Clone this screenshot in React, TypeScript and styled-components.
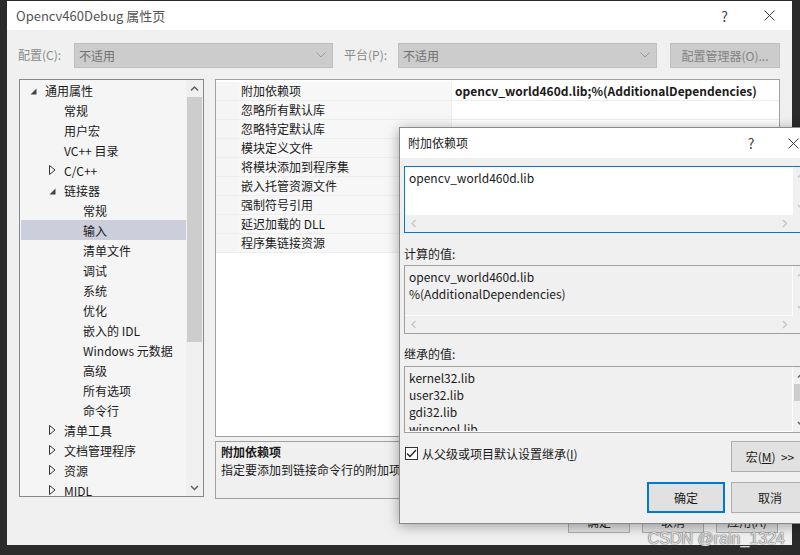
import styled, { createGlobalStyle } from 'styled-components'

const GlobalStyle = createGlobalStyle`
  html, body {
    margin: 0;
    padding: 0;
  }
  body {
    background: #2b2b2b;
    font-family: "Noto Sans CJK SC", "Noto Sans", sans-serif;
    font-size: 12px;
    color: #1a1a1a;
  }
  * {
    box-sizing: border-box;
  }
`

type TreeItem = {
  label: string
  level: number
  arrow?: 'open' | 'closed'
  selected?: boolean
}

const treeItems: TreeItem[] = [
  { label: '通用属性', level: 0, arrow: 'open' },
  { label: '常规', level: 1 },
  { label: '用户宏', level: 1 },
  { label: 'VC++ 目录', level: 1 },
  { label: 'C/C++', level: 1, arrow: 'closed' },
  { label: '链接器', level: 1, arrow: 'open' },
  { label: '常规', level: 2 },
  { label: '输入', level: 2, selected: true },
  { label: '清单文件', level: 2 },
  { label: '调试', level: 2 },
  { label: '系统', level: 2 },
  { label: '优化', level: 2 },
  { label: '嵌入的 IDL', level: 2 },
  { label: 'Windows 元数据', level: 2 },
  { label: '高级', level: 2 },
  { label: '所有选项', level: 2 },
  { label: '命令行', level: 2 },
  { label: '清单工具', level: 1, arrow: 'closed' },
  { label: '文档管理程序', level: 1, arrow: 'closed' },
  { label: '资源', level: 1, arrow: 'closed' },
  { label: 'MIDL', level: 1, arrow: 'closed' },
]

const properties = [
  { name: '附加依赖项', value: 'opencv_world460d.lib;%(AdditionalDependencies)' },
  { name: '忽略所有默认库', value: '' },
  { name: '忽略特定默认库', value: '' },
  { name: '模块定义文件', value: '' },
  { name: '将模块添加到程序集', value: '' },
  { name: '嵌入托管资源文件', value: '' },
  { name: '强制符号引用', value: '' },
  { name: '延迟加载的 DLL', value: '' },
  { name: '程序集链接资源', value: '' },
]

const Page = styled.div`
  position: relative;
  width: 800px;
  height: 555px;
  overflow: hidden;
  padding: 1px 8px 10px 7px;
`

const Window = styled.div`
  width: 785px;
  height: 544px;
  display: flex;
  flex-direction: column;
  background: #f0f0f0;
`

const TitleBar = styled.div<{ $height: number }>`
  height: ${(p) => p.$height}px;
  flex-shrink: 0;
  display: flex;
  align-items: center;
  background: #ffffff;
`

const TitleText = styled.div<{ $size: number; $color: string; $indent: number }>`
  flex: 1;
  padding-left: ${(p) => p.$indent}px;
  font-size: ${(p) => p.$size}px;
  color: ${(p) => p.$color};
  line-height: 18px;
`

const CaptionButton = styled.div<{ $width: number; $gap?: number }>`
  width: ${(p) => p.$width}px;
  margin-right: ${(p) => p.$gap ?? 0}px;
  height: 100%;
  display: flex;
  align-items: center;
  justify-content: center;
  color: #444;
  font-size: 14px;
`

const Toolbar = styled.div`
  display: flex;
  align-items: center;
  height: 26px;
  margin-top: 12px;
  padding-left: 11px;
`

const ToolLabel = styled.div<{ $width: number; $gap?: number }>`
  width: ${(p) => p.$width}px;
  margin-left: ${(p) => p.$gap ?? 0}px;
  color: #8a8a8a;
  line-height: 18px;
`

const Select = styled.div`
  width: 259px;
  height: 25px;
  display: flex;
  align-items: center;
  justify-content: space-between;
  padding: 0 6px 0 4px;
  background: #cccccc;
  border: 1px solid #bfbfbf;
  color: #707070;
`

const ToolButton = styled.div`
  width: 110px;
  height: 25px;
  margin-left: 13px;
  display: flex;
  align-items: center;
  justify-content: center;
  background: #cccccc;
  border: 1px solid #bfbfbf;
  color: #838383;
`

const Content = styled.div`
  display: flex;
  gap: 11px;
  margin-top: 11px;
  padding-left: 12px;
`

const Tree = styled.div`
  width: 185px;
  height: 418px;
  display: flex;
  border: 1px solid #828790;
  background: #f5f5f5;
`

const TreeList = styled.div`
  flex: 1;
  overflow: hidden;
`

const TreeRow = styled.div<{ $level: number; $selected?: boolean }>`
  height: 20px;
  display: flex;
  align-items: center;
  margin-left: 1px;
  padding-left: ${(p) => 7 + p.$level * 19}px;
  background: ${(p) => (p.$selected ? '#cccedb' : 'transparent')};
  color: #1a1a1a;
  white-space: nowrap;
`

const TreeArrow = styled.div`
  width: 17px;
  height: 20px;
  flex-shrink: 0;
  display: flex;
  align-items: center;
  padding-left: 2px;
`

const VScroll = styled.div<{ $bg?: string }>`
  width: 17px;
  flex-shrink: 0;
  display: flex;
  flex-direction: column;
  background: ${(p) => p.$bg ?? '#f0f0f0'};
`

const ScrollArrow = styled.div`
  height: 17px;
  flex-shrink: 0;
  display: flex;
  align-items: center;
  justify-content: center;
`

const ScrollThumb = styled.div<{ $size: number }>`
  height: ${(p) => p.$size}px;
  margin: 0 1px;
  background: #cdcdcd;
`

const ScrollSpacer = styled.div`
  flex: 1;
`

const RightColumn = styled.div`
  width: 565px;
  display: flex;
  flex-direction: column;
  gap: 4px;
`

const Grid = styled.div`
  height: 358px;
  padding-top: 2px;
  border: 1px solid #a0a0a0;
  background: #ffffff;
`

const GridRow = styled.div`
  height: 19px;
  display: flex;
  border-bottom: 1px solid #eeeeee;
`

const GridGutter = styled.div`
  width: 21px;
  background: #f5f5f5;
`

const GridName = styled.div`
  width: 215px;
  padding-left: 4px;
  line-height: 18px;
  background: #f7f7f7;
  border-right: 1px solid #eeeeee;
  white-space: nowrap;
`

const GridValue = styled.div`
  flex: 1;
  padding-left: 3px;
  line-height: 18px;
  font-weight: 700;
  white-space: nowrap;
`

const Description = styled.div`
  height: 58px;
  padding: 1px 5px;
  border: 1px solid #a0a0a0;
  line-height: 18px;
`

const DescTitle = styled.div`
  font-weight: 700;
`

const ButtonRow = styled.div<{ $gap: number; $top: number; $right: number }>`
  display: flex;
  justify-content: flex-end;
  gap: ${(p) => p.$gap}px;
  margin-top: ${(p) => p.$top}px;
  padding-right: ${(p) => p.$right}px;
`

const Button = styled.div<{ $width: number; $height: number; $default?: boolean }>`
  width: ${(p) => p.$width}px;
  height: ${(p) => p.$height}px;
  display: flex;
  align-items: center;
  justify-content: center;
  background: #e1e1e1;
  border: ${(p) => (p.$default ? '2px solid #0078d7' : '1px solid #adadad')};
  color: #1a1a1a;
  white-space: nowrap;
`

const Dialog = styled.div`
  position: absolute;
  left: 399px;
  top: 127px;
  width: 418px;
  height: 397px;
  display: flex;
  flex-direction: column;
  background: #f0f0f0;
  border: 1px solid #8a8a8a;
  box-shadow: 0 2px 12px rgba(0, 0, 0, 0.35);
`

const DialogBody = styled.div`
  padding: 8px 5px 0 4px;
  display: flex;
  flex-direction: column;
`

const FieldLabel = styled.div<{ $top: number; $bottom: number }>`
  margin: ${(p) => p.$top}px 0 ${(p) => p.$bottom}px;
  line-height: 17px;
`

const ListBox = styled.div<{ $height: number; $focused?: boolean; $hscroll?: boolean }>`
  height: ${(p) => p.$height}px;
  display: grid;
  grid-template-columns: 1fr 17px;
  grid-template-rows: ${(p) => (p.$hscroll ? '1fr 17px' : '1fr')};
  border: 1px solid ${(p) => (p.$focused ? '#0078d7' : '#a0a0a0')};
  background: #f0f0f0;
  overflow: hidden;
`

const ListText = styled.div<{ $white?: boolean }>`
  padding: 2px 4px 0;
  line-height: 17px;
  overflow: hidden;
  background: ${(p) => (p.$white ? '#ffffff' : '#f0f0f0')};
  border-right: 1px solid #ffffff;
  border-bottom: 1px solid #ffffff;
  color: #1a1a1a;
  white-space: nowrap;
`

const HScroll = styled.div`
  display: flex;
  justify-content: space-between;
  align-items: center;
`

const HArrow = styled.div`
  width: 17px;
  height: 17px;
  display: flex;
  align-items: center;
  justify-content: center;
`

const OptionRow = styled.div`
  display: flex;
  justify-content: space-between;
  align-items: flex-start;
  margin-top: 8px;
  padding-right: 2px;
`

const CheckLabel = styled.div`
  display: flex;
  align-items: center;
  gap: 4px;
  margin-top: 4px;
  padding-left: 1px;
  line-height: 17px;
`

const CheckBox = styled.div`
  width: 13px;
  height: 13px;
  display: flex;
  align-items: center;
  justify-content: center;
  border: 1px solid #333333;
  background: #ffffff;
`

const Mnemonic = styled.span`
  text-decoration: underline;
`

const Watermark = styled.div`
  position: absolute;
  right: 15px;
  bottom: 7px;
  font-family: "Liberation Sans", Arial, sans-serif;
  font-size: 16px;
  color: rgba(245, 245, 245, 0.85);
  text-shadow: 0 0 1px #555, 0 0 1px #555;
`

const CloseIcon = ({ size }: { size: number }) => (
  <svg width={size} height={size} viewBox="0 0 10 10">
    <path d="M0.5 0.5 L9.5 9.5 M9.5 0.5 L0.5 9.5" stroke="#333" strokeWidth="0.9" fill="none" />
  </svg>
)

const Chevron = ({ dir, color }: { dir: 'up' | 'down' | 'left' | 'right'; color: string }) => {
  const paths = {
    up: 'M1 5.5 L4.5 2 L8 5.5',
    down: 'M1 2 L4.5 5.5 L8 2',
    left: 'M5.5 1 L2 4.5 L5.5 8',
    right: 'M2 1 L5.5 4.5 L2 8',
  }
  const vertical = dir === 'up' || dir === 'down'
  return (
    <svg width={vertical ? 9 : 7} height={vertical ? 7 : 9} viewBox={vertical ? '0 0 9 7' : '0 0 7 9'}>
      <path d={paths[dir]} stroke={color} strokeWidth="1.5" fill="none" />
    </svg>
  )
}

const SelectChevron = () => (
  <svg width="10" height="6" viewBox="0 0 10 6">
    <path d="M0.5 0.5 L5 5 L9.5 0.5" stroke="#9a9a9a" strokeWidth="1" fill="none" />
  </svg>
)

const Triangle = ({ open }: { open: boolean }) =>
  open ? (
    <svg width="7" height="7" viewBox="0 0 7 7" style={{ marginTop: 2 }}>
      <path d="M6.5 0.5 L6.5 6.5 L0.5 6.5 Z" fill="#444" />
    </svg>
  ) : (
    <svg width="7" height="10" viewBox="0 0 7 10">
      <path d="M0.5 0.5 L6 5 L0.5 9.5 Z" fill="none" stroke="#333" strokeWidth="1" />
    </svg>
  )

const App = () => {
  return (
    <Page>
      <GlobalStyle />
      <Window>
        <TitleBar $height={29}>
          <TitleText $size={13} $color="#555" $indent={9}>
            Opencv460Debug 属性页
          </TitleText>
          <CaptionButton $width={45}>?</CaptionButton>
          <CaptionButton $width={45}>
            <CloseIcon size={11} />
          </CaptionButton>
        </TitleBar>

        <Toolbar>
          <ToolLabel $width={56}>配置(C):</ToolLabel>
          <Select>
            <span>不适用</span>
            <SelectChevron />
          </Select>
          <ToolLabel $width={54} $gap={11}>
            平台(P):
          </ToolLabel>
          <Select>
            <span>不适用</span>
            <SelectChevron />
          </Select>
          <ToolButton>配置管理器(O)...</ToolButton>
        </Toolbar>

        <Content>
          <Tree>
            <TreeList>
              {treeItems.map((item, i) => (
                <TreeRow key={i} $level={item.level} $selected={item.selected}>
                  <TreeArrow>{item.arrow && <Triangle open={item.arrow === 'open'} />}</TreeArrow>
                  {item.label}
                </TreeRow>
              ))}
            </TreeList>
            <VScroll>
              <ScrollArrow>
                <Chevron dir="up" color="#606060" />
              </ScrollArrow>
              <ScrollThumb $size={245} />
              <ScrollSpacer />
              <ScrollArrow>
                <Chevron dir="down" color="#606060" />
              </ScrollArrow>
            </VScroll>
          </Tree>

          <RightColumn>
            <Grid>
              {properties.map((prop) => (
                <GridRow key={prop.name}>
                  <GridGutter />
                  <GridName>{prop.name}</GridName>
                  <GridValue>{prop.value}</GridValue>
                </GridRow>
              ))}
            </Grid>
            <Description>
              <DescTitle>附加依赖项</DescTitle>
              <div>指定要添加到链接命令行的附加项</div>
            </Description>
          </RightColumn>
        </Content>

        <ButtonRow $gap={12} $top={11} $right={14}>
          <Button $width={62} $height={23}>
            确定
          </Button>
          <Button $width={62} $height={23}>
            取消
          </Button>
          <Button $width={62} $height={23}>
            应用(A)
          </Button>
        </ButtonRow>
      </Window>

      <Dialog>
        <TitleBar $height={30}>
          <TitleText $size={12} $color="#1a1a1a" $indent={8}>
            附加依赖项
          </TitleText>
          <CaptionButton $width={30} $gap={5}>
            ?
          </CaptionButton>
          <CaptionButton $width={45}>
            <CloseIcon size={11} />
          </CaptionButton>
        </TitleBar>

        <DialogBody>
          <ListBox $height={67} $focused $hscroll>
            <ListText $white>opencv_world460d.lib</ListText>
            <VScroll>
              <ScrollArrow>
                <Chevron dir="up" color="#c8c8c8" />
              </ScrollArrow>
              <ScrollSpacer />
              <ScrollArrow>
                <Chevron dir="down" color="#c8c8c8" />
              </ScrollArrow>
            </VScroll>
            <HScroll>
              <HArrow>
                <Chevron dir="left" color="#c8c8c8" />
              </HArrow>
              <HArrow>
                <Chevron dir="right" color="#c8c8c8" />
              </HArrow>
            </HScroll>
            <div />
          </ListBox>

          <FieldLabel $top={12} $bottom={3}>
            计算的值:
          </FieldLabel>
          <ListBox $height={69} $hscroll>
            <ListText>
              opencv_world460d.lib
              <br />
              %(AdditionalDependencies)
            </ListText>
            <VScroll>
              <ScrollArrow>
                <Chevron dir="up" color="#c8c8c8" />
              </ScrollArrow>
              <ScrollSpacer />
              <ScrollArrow>
                <Chevron dir="down" color="#c8c8c8" />
              </ScrollArrow>
            </VScroll>
            <HScroll>
              <HArrow>
                <Chevron dir="left" color="#c8c8c8" />
              </HArrow>
              <HArrow>
                <Chevron dir="right" color="#c8c8c8" />
              </HArrow>
            </HScroll>
            <div />
          </ListBox>

          <FieldLabel $top={11} $bottom={4}>
            继承的值:
          </FieldLabel>
          <ListBox $height={67}>
            <ListText>
              kernel32.lib
              <br />
              user32.lib
              <br />
              gdi32.lib
              <br />
              winspool.lib
            </ListText>
            <VScroll>
              <ScrollArrow>
                <Chevron dir="up" color="#606060" />
              </ScrollArrow>
              <ScrollThumb $size={17} />
              <ScrollSpacer />
              <ScrollArrow>
                <Chevron dir="down" color="#606060" />
              </ScrollArrow>
            </VScroll>
          </ListBox>

          <OptionRow>
            <CheckLabel>
              <CheckBox>
                <svg width="11" height="9" viewBox="0 0 11 9">
                  <path d="M1 4.5 L4 7.5 L10 1" stroke="#222" strokeWidth="1.3" fill="none" />
                </svg>
              </CheckBox>
              <span>
                从父级或项目默认设置继承(<Mnemonic>I</Mnemonic>)
              </span>
            </CheckLabel>
            <Button $width={78} $height={31}>
              宏(<Mnemonic>M</Mnemonic>)&nbsp;&nbsp;&gt;&gt;
            </Button>
          </OptionRow>

          <ButtonRow $gap={6} $top={10} $right={2}>
            <Button $width={78} $height={31} $default>
              确定
            </Button>
            <Button $width={78} $height={31}>
              取消
            </Button>
          </ButtonRow>
        </DialogBody>
      </Dialog>

      <Watermark>CSDN @rain_1324</Watermark>
    </Page>
  )
}

export default App
